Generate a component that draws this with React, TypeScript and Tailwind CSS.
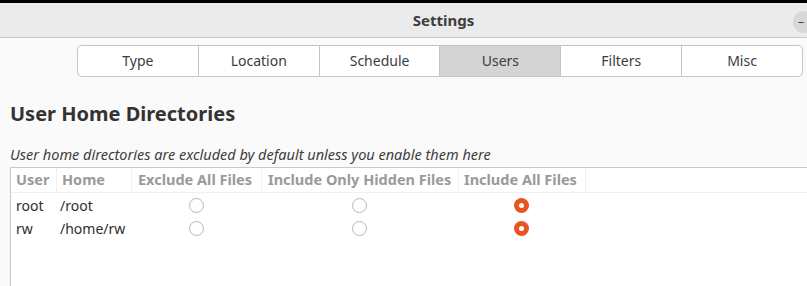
import React from "react";

const tabs = ["Type", "Location", "Schedule", "Users", "Filters", "Misc"];

function Radio({ checked }: { checked: boolean }) {
  return checked ? (
    <span className="inline-flex h-[15px] w-[15px] items-center justify-center rounded-full bg-[#e95420]">
      <span className="h-[5px] w-[5px] rounded-full bg-white" />
    </span>
  ) : (
    <span className="inline-block h-[15px] w-[15px] rounded-full border border-[#b8b8b8] bg-white" />
  );
}

const rows = [
  { user: "root", home: "/root" },
  { user: "rw", home: "/home/rw" },
];

export default function App() {
  return (
    <div
      className="flex h-[286px] w-[807px] flex-col overflow-hidden bg-[#fafafa] text-[#3d3d3d]"
      style={{ fontFamily: '"Noto Sans", sans-serif' }}
    >
      <div className="h-[3px] bg-black" />
      <div className="relative flex h-[35px] items-center justify-center border-b border-[#c8c8c8] bg-[#ebebeb]">
        <span className="pl-[80px] text-[15px] font-bold text-[#3d3d3d]">Settings</span>
        <span className="absolute left-[793px] top-[8px] flex h-[22px] w-[22px] items-center rounded-full bg-[#d8d8d8] pl-[5px] text-[12px] leading-none">
          –
        </span>
      </div>
      <div className="flex pl-[77px] pr-[4px] pt-[7px]">
        <div className="flex h-[32px] flex-1 overflow-hidden rounded-[5px] border border-[#c4c4c4] bg-white">
          {tabs.map((t, i) => (
            <div
              key={t}
              className={`flex flex-1 items-center justify-center pb-[2px] text-[14px] text-[#3c3c3c] ${
                i > 0 ? "border-l border-[#c4c4c4]" : ""
              } ${t === "Users" ? "bg-[#d4d4d4]" : ""}`}
            >
              {t}
            </div>
          ))}
        </div>
      </div>
      <div className="pl-[10px] pt-[23px] text-[20px] font-bold leading-[28px] text-[#333]">
        User Home Directories
      </div>
      <div className="pl-[10px] pt-[17px] text-[14.5px] italic leading-[18px] text-[#3d3d3d]">
        User home directories are excluded by default unless you enable them here
      </div>
      <div className="ml-[10px] mt-[4px] flex-1 border-l border-t border-[#c8c8c8] bg-white">
        <div className="flex h-[25px] border-b border-[#f0f0f0] text-[14.5px] font-bold text-[#9a9a9a]">
          <div className="flex w-[46px] items-center border-r border-[#f0f0f0] pl-[5px]">User</div>
          <div className="flex w-[75px] items-center border-r border-[#f0f0f0] pl-[5px]">Home</div>
          <div className="flex w-[130px] items-center border-r border-[#f0f0f0] pl-[6px]">Exclude All Files</div>
          <div className="flex w-[197px] items-center border-r border-[#f0f0f0] pl-[6px]">Include Only Hidden Files</div>
          <div className="flex w-[127px] items-center border-r border-[#f0f0f0] pl-[5px]">Include All Files</div>
        </div>
        <div className="pt-[1px]">
          {rows.map((r) => (
            <div key={r.user} className="flex h-[23px] items-center text-[14px] text-[#2e2e2e]">
              <div className="w-[46px] pl-[5px]">{r.user}</div>
              <div className="w-[75px] pl-[3px]">{r.home}</div>
              <div className="flex w-[130px] justify-center pr-[1px]">
                <Radio checked={false} />
              </div>
              <div className="flex w-[197px] justify-center pr-[2px]">
                <Radio checked={false} />
              </div>
              <div className="flex w-[127px] justify-center pr-[2px]">
                <Radio checked={true} />
              </div>
            </div>
          ))}
        </div>
      </div>
    </div>
  );
}
